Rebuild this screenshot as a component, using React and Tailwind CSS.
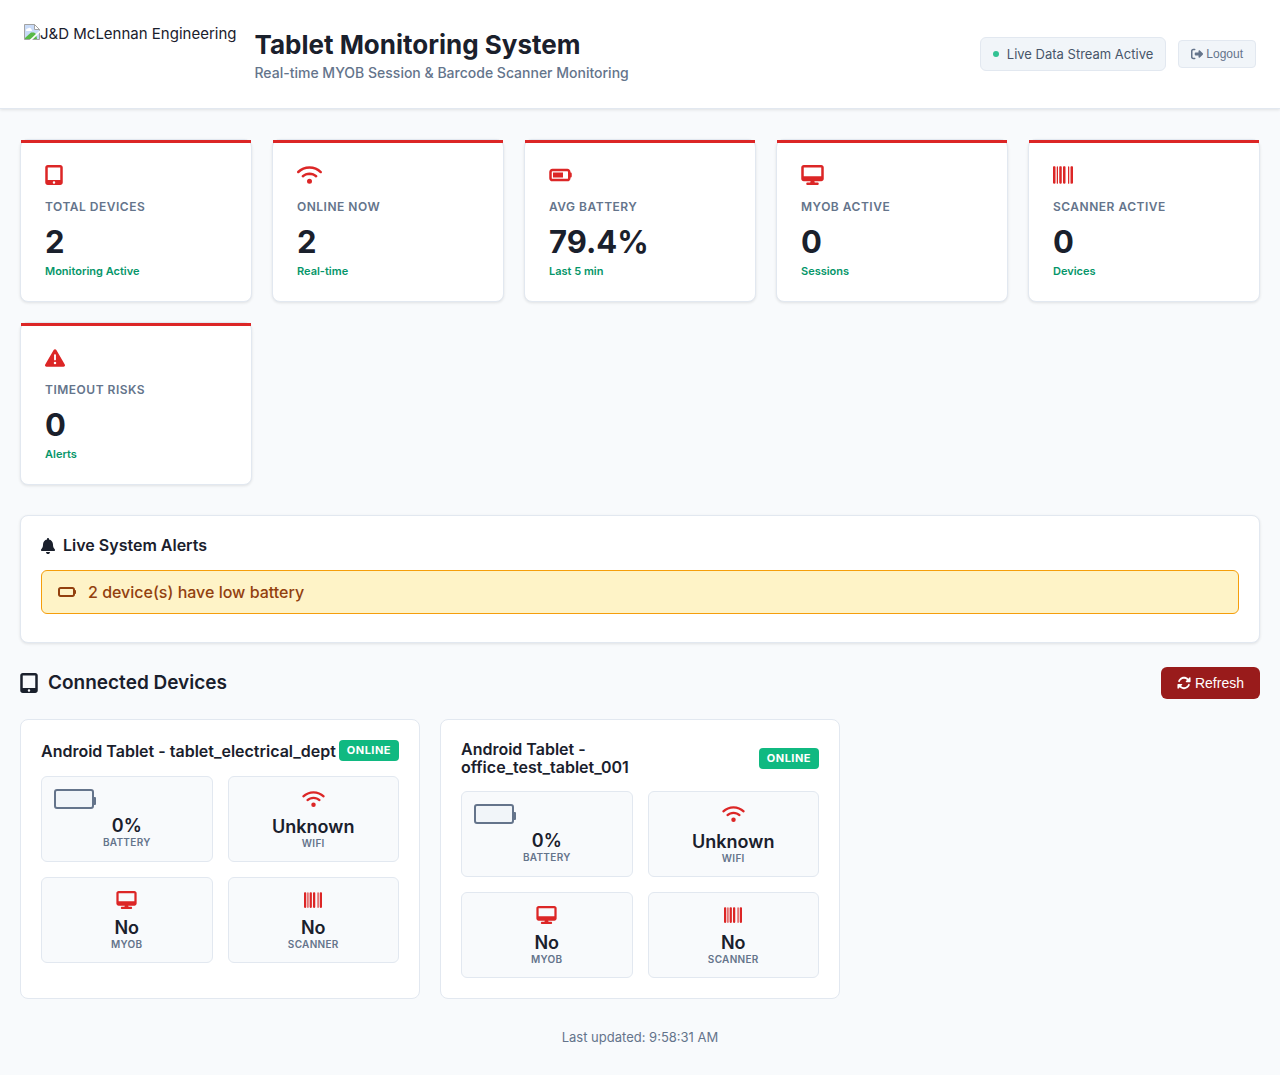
import {
  FaTabletScreenButton,
  FaWifi,
  FaBatteryThreeQuarters,
  FaBatteryEmpty,
  FaDesktop,
  FaBarcode,
  FaTriangleExclamation,
  FaBell,
  FaRotate,
  FaRightFromBracket,
} from "react-icons/fa6";

const stats = [
  { icon: FaTabletScreenButton, iconWidth: "w-[18px]", label: "Total Devices", value: "2", note: "Monitoring Active" },
  { icon: FaWifi, iconWidth: "w-[25px]", label: "Online Now", value: "2", note: "Real-time" },
  { icon: FaBatteryThreeQuarters, iconWidth: "w-[23px]", label: "Avg Battery", value: "79.4%", note: "Last 5 min" },
  { icon: FaDesktop, iconWidth: "w-[23px]", label: "MYOB Active", value: "0", note: "Sessions" },
  { icon: FaBarcode, iconWidth: "w-5", label: "Scanner Active", value: "0", note: "Devices" },
  { icon: FaTriangleExclamation, iconWidth: "w-5", label: "Timeout Risks", value: "0", note: "Alerts" },
];

const devices = ["Android Tablet - tablet_electrical_dept", "Android Tablet - office_test_tablet_001"];

function BrokenImage() {
  return (
    <svg viewBox="0 0 16 16" className="h-4 w-4 shrink-0" aria-hidden="true">
      <path d="M0.5 0.5H10.5L15.5 5.5V15.5H0.5Z" fill="#c9dbf8" stroke="#a3a3a3" />
      <path d="M2 6.5C2 5 3.2 4.4 4 4.6C4.6 3.2 7 3.4 7.2 5.2C8.2 5.4 8.2 6.8 7.4 7H2.4Z" fill="#fff" />
      <path d="M1 15V14L7 8.5H10L12 10L13 15Z" fill="#57b947" />
      <path d="M5.5 16L16 6.2V8.4L8 16Z" fill="#fff" />
      <path d="M10.5 0.5V5.5H15.5Z" fill="#fff" stroke="#a3a3a3" />
    </svg>
  );
}

function StatCard({ icon: Icon, iconWidth, label, value, note }) {
  return (
    <div className="relative rounded-lg border border-[#e2e8f0] bg-white px-6 pt-[25px] pb-[23px] shadow-[0_1px_3px_rgba(0,0,0,0.1)]">
      <div className="absolute inset-x-0 top-0 h-[3px] bg-[#dc2626]" />
      <Icon className={`h-5 text-[#dc2626] ${iconWidth}`} />
      <div className="mt-3.5 text-xs leading-4 font-semibold tracking-[0.5px] text-[#64748b] uppercase">{label}</div>
      <div className="mt-[11px] text-[31px] leading-8 font-bold">{value}</div>
      <div className="mt-[7px] text-[11px] leading-[13px] font-semibold text-[#059669]">{note}</div>
    </div>
  );
}

function Metric({ icon: Icon, iconWidth, value, label }) {
  return (
    <div className="h-[86px] rounded-md border border-[#e2e8f0] bg-[#f8fafc] p-3 text-center">
      {Icon ? (
        <Icon className={`mx-auto mt-px mb-[9px] h-[18px] text-[#dc2626] ${iconWidth}`} />
      ) : (
        <div className="relative mb-[7px] h-5 w-10 rounded-[3px] border-2 border-[#64748b] bg-[#f1f5f9]">
          <div className="absolute top-1.5 -right-1 h-2 w-[3px] rounded-r-[1px] bg-[#64748b]" />
        </div>
      )}
      <div className="text-lg leading-5 font-semibold">{value}</div>
      <div className="text-[10px] leading-3 font-semibold tracking-[0.3px] text-[#64748b] uppercase">{label}</div>
    </div>
  );
}

function DeviceCard({ name }) {
  return (
    <article className="rounded-lg border border-[#e2e8f0] bg-white p-5">
      <div className="mb-[15px] flex items-center justify-between gap-0.5">
        <h3 className="text-base leading-[18px] font-semibold">{name}</h3>
        <span className="rounded bg-[#10b981] px-2 py-1 text-[11px] leading-[13px] font-bold tracking-[0.5px] text-white uppercase">
          Online
        </span>
      </div>
      <div className="grid grid-cols-2 gap-[15px]">
        <Metric value="0%" label="Battery" />
        <Metric icon={FaWifi} iconWidth="w-[23px]" value="Unknown" label="WiFi" />
        <Metric icon={FaDesktop} iconWidth="w-[21px]" value="No" label="MYOB" />
        <Metric icon={FaBarcode} iconWidth="w-[18px]" value="No" label="Scanner" />
      </div>
    </article>
  );
}

export default function App() {
  return (
    <div className="min-h-screen bg-[#f8fafc] font-['Inter',sans-serif] text-[#1a202c]">
      <header className="flex items-center justify-between border-b border-[#e2e8f0] bg-white p-6 shadow-[0_1px_3px_rgba(0,0,0,0.1)]">
        <div className="flex items-center gap-[18px]">
          <div className="flex h-[60px] items-start">
            <BrokenImage />
            <span className="text-[15px] leading-5">J&amp;D McLennan Engineering</span>
          </div>
          <div>
            <h1 className="text-[26px] leading-[34px] font-bold">Tablet Monitoring System</h1>
            <p className="mt-0.5 text-sm leading-[17px] font-medium text-[#64748b]">
              Real-time MYOB Session &amp; Barcode Scanner Monitoring
            </p>
          </div>
        </div>
        <div className="flex items-center gap-3">
          <div className="flex items-center gap-2 rounded-md border border-[#e2e8f0] bg-[#f1f5f9] px-3 py-2 text-[13px] leading-4 text-[#475569]">
            <span className="h-1.5 w-1.5 rounded-full bg-[#10b981] opacity-85" />
            Live Data Stream Active
          </div>
          <button
            type="button"
            className="flex items-center gap-[3px] rounded border border-[#e2e8f0] bg-[#f1f5f9] px-3 py-1.5 font-['Liberation_Sans',sans-serif] text-xs leading-[14px] text-[#64748b]"
          >
            <FaRightFromBracket className="h-3 w-3" />
            Logout
          </button>
        </div>
      </header>

      <main className="px-5 py-[30px]">
        <section className="grid grid-cols-[repeat(auto-fit,minmax(220px,1fr))] gap-5">
          {stats.map((s) => (
            <StatCard key={s.label} {...s} />
          ))}
        </section>

        <section className="mt-[30px] rounded-lg border border-[#e2e8f0] bg-white px-5 pt-5 pb-7 shadow-[0_1px_3px_rgba(0,0,0,0.1)]">
          <h2 className="flex items-center gap-2 text-base leading-[19px] font-semibold">
            <FaBell className="h-4 w-3.5" />
            Live System Alerts
          </h2>
          <div
            role="alert"
            className="mt-[15px] flex items-center gap-3 rounded-md border border-[#f59e0b] bg-[#fef3c7] px-4 py-3 text-base leading-[18px] font-medium text-[#92400e]"
          >
            <FaBatteryEmpty className="h-4 w-[18px]" />
            2 device(s) have low battery
          </div>
        </section>

        <section className="mt-6">
          <div className="mb-5 flex items-center justify-between">
            <h2 className="flex items-center gap-2.5 text-[19px] leading-6 font-semibold">
              <FaTabletScreenButton className="h-5 w-[18px]" />
              Connected Devices
            </h2>
            <button
              type="button"
              className="flex items-center gap-1 rounded-md bg-[#991b1b] px-4 py-2 font-['Liberation_Sans',sans-serif] text-sm leading-4 text-white"
            >
              <FaRotate className="h-3.5 w-3.5" />
              Refresh
            </button>
          </div>
          <div className="grid grid-cols-[repeat(auto-fill,minmax(350px,1fr))] gap-5">
            {devices.map((name) => (
              <DeviceCard key={name} name={name} />
            ))}
          </div>
        </section>

        <p className="mt-[30px] text-center text-[13px] leading-4 text-[#64748b]">Last updated: 9:58:31 AM</p>
      </main>
    </div>
  );
}
